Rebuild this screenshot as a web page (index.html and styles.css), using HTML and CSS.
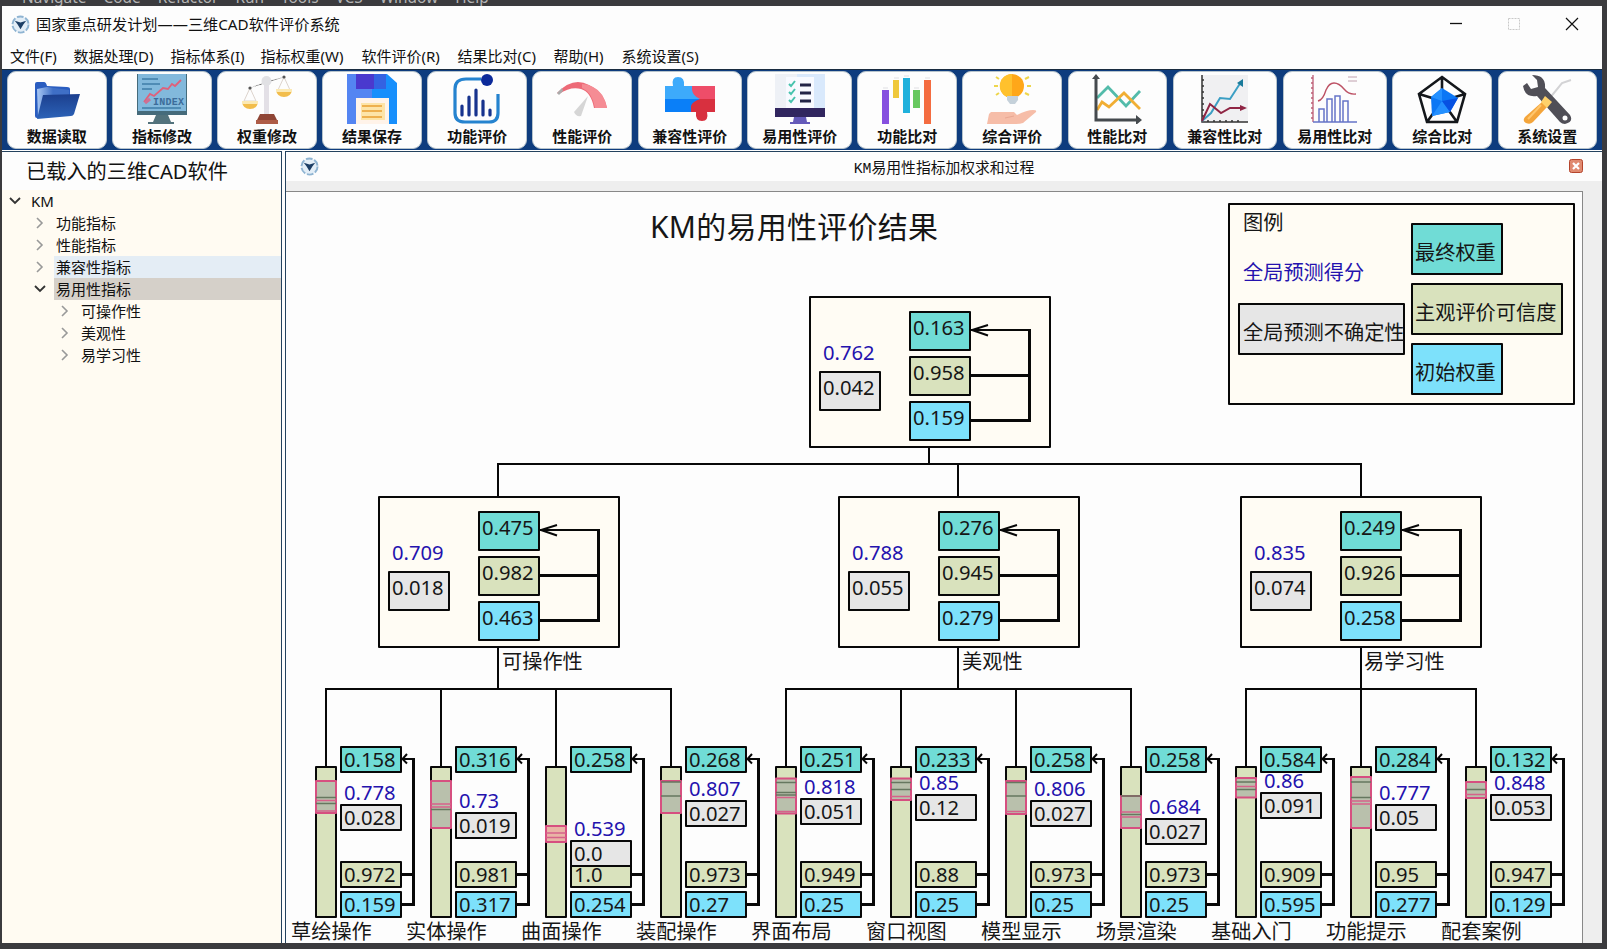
FILE: index.html
```html
<!DOCTYPE html>
<html lang="zh-CN">
<head>
<meta charset="utf-8">
<title>国家重点研发计划——三维CAD软件评价系统</title>
<link rel="stylesheet" href="styles.css">
</head>
<body>
<div class="backdrop"><span>Navigate</span><span>Code</span><span>Refactor</span><span>Run</span><span>Tools</span><span>VCS</span><span>Window</span><span>Help</span></div>
<div class="window">
  <header class="titlebar">
    <svg class="logo" viewBox="0 0 20 20"><circle cx="10" cy="10" r="8.5" fill="#e3eef7" stroke="#8fb4d2" stroke-width="2" stroke-dasharray="7 2"/><path d="M4 6l6 2 6-2-3 4-3 5-3-5z" fill="#1d3f66"/></svg>
    <h1>国家重点研发计划——三维CAD软件评价系统</h1>
    <div class="controls">
      <svg viewBox="0 0 14 14"><path d="M1 6.5h12" stroke="#111" stroke-width="1.3"/></svg>
      <svg viewBox="0 0 14 14"><path d="M1.5 1.5h11v11h-11z" fill="none" stroke="#c9c9c9" stroke-dasharray="2 1"/></svg>
      <svg viewBox="0 0 14 14"><path d="M1 1l12 12M13 1L1 13" stroke="#111" stroke-width="1.2"/></svg>
    </div>
  </header>
  <nav class="menu"><span>文件(F)</span><span>数据处理(D)</span><span>指标体系(I)</span><span>指标权重(W)</span><span>软件评价(R)</span><span>结果比对(C)</span><span>帮助(H)</span><span>系统设置(S)</span></nav>

  <div class="toolbar">
    <button class="tool"><svg viewBox="0 0 50 50"><defs><linearGradient id="fb" x1="0" x2="1"><stop offset="0" stop-color="#a9c8f4"/><stop offset=".5" stop-color="#3f6fc6"/></linearGradient><linearGradient id="ff" x1="0" y1="0" x2="0" y2="1"><stop offset="0" stop-color="#1c3f8e"/><stop offset="1" stop-color="#2c63b8"/></linearGradient></defs><path d="M3 10q0-2 2-2h7q2 0 3 4l20 1q3 0 3 2v8L8 44H5q-2 0-2-2z" fill="#2a5dc0"/><path d="M5 15l10-2 22 3v8L6 43z" fill="url(#fb)"/><path d="M11 21l37-1-6 20q-1 2-3 2L5 45z" fill="url(#ff)"/></svg><b>数据读取</b></button>
    <button class="tool"><svg viewBox="0 0 50 50"><path d="M0 0h50v41H0z" fill="#456b7b"/><path d="M1 0h48v37H1z" fill="#82b9dc"/><path d="M5 5h16M5 10h18M5 15h10M5 34h39" stroke="#3f7da8" stroke-width="1.5"/><path d="M7 28l6-8 4 2 9-8 5 1 4-5 3 2 6-6" fill="none" stroke="#e0607a" stroke-width="1.8"/><path d="M8 29l5-4" stroke="#ce6f93" stroke-width="3"/><text x="16" y="31" class="index-label" textLength="31">INDEX</text><path d="M19 41h12l3 7h3v2H11v-2h5z" fill="#52727c"/></svg><b>指标修改</b></button>
    <button class="tool"><svg viewBox="0 0 50 50"><path d="M8 14L24 8l18-5" stroke="#e2e2e2" stroke-width="1.5" stroke-dasharray="2 2"/><path d="M8 14L2 27h12zM42 3l-6 13h12z" fill="none" stroke="#ddd4cd" stroke-width="1"/><circle cx="8" cy="14" r="1.6" fill="#555"/><circle cx="42" cy="3" r="1.6" fill="#555"/><path d="M0 28h16q-1 7-8 7t-8-7zM34 16h16q-1 7-8 7t-8-7z" fill="#f2bd4c"/><path d="M0 27h16v3H0zM34 15h16v3H34z" fill="#fbe9b4"/><path d="M22 8h5v33h-5z" fill="#e3e0e6"/><circle cx="24.500" cy="7" r="5" fill="#e1e1e4"/><path d="M18 40h14l3 6H15z" fill="#8f4535"/><path d="M14 46h22v4H14z" fill="#ae5c47"/></svg><b>权重修改</b></button>
    <button class="tool"><svg viewBox="0 0 50 50"><path d="M0 0h40l10 9v41H0z" fill="#178ffc"/><path d="M0 0h25v50H0z" fill="#5485f2"/><path d="M9 0h18v15H9z" fill="#4a39ce"/><path d="M27 0h12v15H27z" fill="#3462e2"/><path d="M9 24h33v26H9z" fill="#fff3e9"/><path d="M14 29h24v17H14z" fill="#fde4a8"/><path d="M15 32h20M15 37h20M15 43h20" stroke="#eeb04e" stroke-width="2"/></svg><b>结果保存</b></button>
    <button class="tool"><svg viewBox="0 0 50 50"><path d="M29 5H14Q3 5 3 15v24q0 9 10 9h24q9 0 9-9V20" fill="none" stroke="#2583cf" stroke-width="3.2"/><circle cx="35" cy="6" r="6" fill="#0c2a9a"/><path d="M10 32v9M17 23v18M24 16v25M31 27v14M38 36v5" stroke="#17338e" stroke-width="3.200" stroke-linecap="round"/></svg><b>功能评价</b></button>
    <button class="tool"><svg viewBox="0 0 50 50"><path d="M0 19Q16 2 32 11q15 7 18 23H37Q34 18 24 15 14 12 2 20z" fill="#ed6a77"/><path d="M25 14Q35 18 38 34h12q-3-16-14-21-5-3-11-3z" fill="#f58c94"/><path d="M0 19l5-5 1 3-4 4z" fill="#aaa"/><path d="M31 22L17 38q2 5 7 4z" fill="#d6d6d6"/></svg><b>性能评价</b></button>
    <button class="tool wide"><svg viewBox="0 0 50 50"><path d="M25 12h25v26H25z" fill="#ee4d69"/><path d="M25 25h25v13h-8q2 9-5 9t-6-9h-6z" fill="#d8303f"/><path d="M0 12h8Q6 3 13 3t6 9h8v4q1 6 8 9H0z" fill="#3daafb"/><path d="M0 25h35q-8 3-9 7v6H0z" fill="#0a7ff8"/></svg><b>兼容性评价</b></button>
    <button class="tool wide"><svg viewBox="0 0 50 50"><path d="M0 0h50v35H0z" fill="#d9e9fc"/><path d="M0 0h22v35H0z" fill="#eef1f6"/><path d="M11 3h28v32H11z" fill="#f8faff"/><path d="M0 34h50v9H0z" fill="#31265f"/><path d="M19 43h12l1 5h3v2H15v-2h3z" fill="#655ab9"/><path d="M25 11h11M25 19h11M25 27h11" stroke="#222447" stroke-width="3"/><path d="M14 10l2 2 4-5M14 18l2 2 4-5M14 26l2 2 4-5" fill="none" stroke="#46c3ad" stroke-width="2"/></svg><b>易用性评价</b></button>
    <button class="tool"><svg viewBox="0 0 50 50"><path d="M0 16h7v34H0z" fill="#8650df"/><path d="M11 6h6v18h-6z" fill="#efc83c"/><path d="M21 4h7v35h-7z" fill="#20b1dc"/><path d="M31 16h7v18h-7z" fill="#67c85f"/><path d="M42 6h7v44h-7z" fill="#f46c40"/><path d="M1 14h5M12 4h5M22 2h5M32 14h5M43 4h5" stroke="#dfdfe3"/></svg><b>功能比对</b></button>
    <button class="tool"><svg viewBox="0 0 50 50"><circle cx="25" cy="12" r="12" fill="#ffa719"/><path d="M25 0a12 12 0 0 0-5 23h5z" fill="#ffc12d"/><path d="M20 22h11v4l-3 4h-5l-3-4z" fill="#c5d1da"/><path d="M38 5l4-2M40 12h4M38 19l4 2M12 5L9 3M11 12H7M12 19l-3 2" stroke="#eed64c" stroke-width="2"/><path d="M4 38h23l3 3q10-5 16-5 4 0 3 2L36 49q-3 1-8 1H0l2-10z" fill="#f6bda8"/><path d="M27 42l-9 2" stroke="#e9a792"/></svg><b>综合评价</b></button>
    <button class="tool"><svg viewBox="0 0 50 50"><path d="M5 24l11-11 18 19 14-15" fill="none" stroke="#53bbaa" stroke-width="2.800"/><path d="M5 36l5-8 7 5 15-14 16 16" fill="none" stroke="#f1ae33" stroke-width="2.800"/><path d="M4 4v42h43" fill="none" stroke="#454a4e" stroke-width="3"/><path d="M0 5l4-5 4 5zM44 41l6 5-6 5z" fill="#454a4e"/></svg><b>性能比对</b></button>
    <button class="tool wide"><svg viewBox="0 0 50 50"><path d="M2 1h46v47H2z" fill="#f0f0f2"/><path d="M2 1v47h46M2 6h2M2 12h2M2 18h2M2 24h2M2 30h2M2 36h2M2 42h2M8 48v-2M14 48v-2M20 48v-2M26 48v-2M32 48v-2M38 48v-2" fill="none" stroke="#333" stroke-width="1.500"/><path d="M2 47l9-8 9-15 10 1L41 8" fill="none" stroke="#3c9fc4" stroke-width="2"/><path d="M2 47l8-17 11 9 9-5h11" fill="none" stroke="#8f2544" stroke-width="2"/><path d="M37 9l6-4v8z" fill="#197a9a"/><path d="M40 31l7 3-7 3z" fill="#8f2544"/></svg><b>兼容性比对</b></button>
    <button class="tool wide"><svg viewBox="0 0 50 50"><path d="M3 1v47M1 4h2M1 9h2M1 14h2M1 19h2M1 24h2M1 29h2M1 34h2M1 39h2M1 44h2" stroke="#bd5d76" stroke-width="1.300"/><path d="M3 48h44M9 48V35h5v13M17 48V25h5v23M25 48V22h5v26M33 48V27h5v21" fill="none" stroke="#6674c7" stroke-width="1.500"/><path d="M8 27q5-1 8-11 3-7 8-7 5 0 10 6 5 6 12 5" fill="none" stroke="#bd5265" stroke-width="1.400"/><path d="M38 3h9M38 7h9" stroke="#c0a0ae"/></svg><b>易用性比对</b></button>
    <button class="tool"><svg viewBox="0 0 50 50"><path d="M25 3l23 17-8 28H10L2 20zM25 3v24M48 20L25 27M40 48L25 27M10 48l15-21M2 20l23 7" fill="none" stroke="#14171b" stroke-width="2.600"/><path d="M25 14l16 10-8 14-18 4-1-19z" fill="#0c77f5"/><path d="M25 14v13l-11-4zM25 27l8 11-18 4z" fill="#2490ff"/><path d="M25 27l16-3-8 14z" fill="#0751e2"/></svg><b>综合比对</b></button>
    <button class="tool"><svg viewBox="0 0 50 50"><path d="M49 6l-9 3-13 16" fill="none" stroke="#d3d3d5" stroke-width="2"/><path d="M10 1Q24 1 23 14L48 41q4 7-5 9-3 0-5-2L15 22Q3 24 1 12l4-3 4 6 7-2-1-7z" fill="#504f57"/><circle cx="43" cy="44" r="2.500" fill="#fff"/><path d="M20 28l5 5-14 15q-3 3-7 1t-1-6z" fill="#f4a53b"/><path d="M23 22l7 6-5 6-6-6z" fill="#ffd16a"/><path d="M19 31L6 45" stroke="#ffc66c" stroke-width="2"/></svg><b>系统设置</b></button>
  </div>

  <main class="workspace">
    <aside class="sidebar">
      <h2>已载入的三维CAD软件</h2>
      <ul class="tree">
        <li><svg class="caret open" viewBox="0 0 12 12"><path d="M1 3l5 5 5-5"/></svg><span>KM</span></li>
        <li class="l1"><svg class="caret" viewBox="0 0 12 12"><path d="M3 1l5 5-5 5"/></svg><span>功能指标</span></li>
        <li class="l1"><svg class="caret" viewBox="0 0 12 12"><path d="M3 1l5 5-5 5"/></svg><span>性能指标</span></li>
        <li class="l1 hover"><svg class="caret" viewBox="0 0 12 12"><path d="M3 1l5 5-5 5"/></svg><span>兼容性指标</span></li>
        <li class="l1 selected"><svg class="caret open" viewBox="0 0 12 12"><path d="M1 3l5 5 5-5"/></svg><span>易用性指标</span></li>
        <li class="l2"><svg class="caret" viewBox="0 0 12 12"><path d="M3 1l5 5-5 5"/></svg><span>可操作性</span></li>
        <li class="l2"><svg class="caret" viewBox="0 0 12 12"><path d="M3 1l5 5-5 5"/></svg><span>美观性</span></li>
        <li class="l2"><svg class="caret" viewBox="0 0 12 12"><path d="M3 1l5 5-5 5"/></svg><span>易学习性</span></li>
      </ul>
    </aside>
    <section class="document">
      <header class="doc-head">
        <svg class="logo" viewBox="0 0 20 20"><circle cx="10" cy="10" r="8.500" fill="#e3eef7" stroke="#8fb4d2" stroke-width="2" stroke-dasharray="7 2"/><path d="M4 6l6 2 6-2-3 4-3 5-3-5z" fill="#1d3f66"/></svg>
        <h3>KM易用性指标加权求和过程</h3>
        <svg class="doc-close" viewBox="0 0 14 14"><rect x=".5" y=".5" width="13" height="13" rx="2" fill="#e08a70" stroke="#b5442c"/><path d="M4 4l6 6M10 4l-6 6" stroke="#fff" stroke-width="2.200"/></svg>
      </header>
      <div class="canvas">
        <svg class="diagram" viewBox="286 192 1296 751" width="1296" height="751">
          <defs>
            <g id="node">
              <rect class="frame" x="0" y="0" width="240" height="150"/>
              <rect class="gray" x="10" y="75" width="60" height="38"/>
              <rect class="teal" x="100" y="15" width="60" height="38"/>
              <rect class="olive" x="100" y="60" width="60" height="38"/>
              <rect class="blue" x="100" y="105" width="60" height="38"/>
              <path class="wire" d="M161 33H220"/>
              <path class="wire bold" d="M219.500 32V125M161 78.500H219M161 123.500H221"/>
              <path class="wire" d="M178 28L162 33L178 38.500"/>
            </g>
            <g id="leaf">
              <rect class="olive" x="-10" y="767" width="20" height="150"/>
              <rect class="teal" x="15" y="747" width="60" height="25"/>
              <rect class="olive" x="15" y="862" width="60" height="25"/>
              <rect class="blue" x="15" y="892" width="60" height="25"/>
              <path class="wire" d="M81 754L76.500 759L81 763.500M77 759H88"/>
              <path class="wire bold" d="M87.500 758V905M76 874.500H87M76 904.500H89"/>
            </g>
            <rect id="unc" class="gray" x="15" y="0" width="60" height="25"/>
          </defs>

          <text class="heading" x="650" y="237.500" textLength="288">KM的易用性评价结果</text>

          <g class="legend">
            <rect class="frame" x="1229" y="204" width="345" height="200"/>
            <rect class="gray" x="1239" y="304" width="165" height="50"/>
            <rect class="teal" x="1412" y="224" width="90" height="50"/>
            <rect class="olive" x="1412" y="284" width="150" height="50"/>
            <rect class="blue" x="1412" y="344" width="90" height="50"/>
            <text x="1243" y="230">图例</text>
            <text class="score" x="1243" y="280">全局预测得分</text>
            <text x="1243" y="340">全局预测不确定性</text>
            <text x="1415" y="259.500">最终权重</text>
            <text x="1415" y="319.500">主观评价可信度</text>
            <text x="1415" y="379.500">初始权重</text>
          </g>

          <path class="wire" d="M929 447V464M498 497V464H1361V497M958 464V497"/>
          <path class="wire" d="M498 647V689M326 767V689H671V767M441 689V767M556 689V767"/>
          <path class="wire" d="M958 647V689M786 767V689H1131V767M901 689V767M1016 689V767"/>
          <path class="wire" d="M1361 647V767M1246 767V689H1476V767"/>

          <g transform="translate(810 297)"><use href="#node"/><text class="score" x="13" y="63">0.762</text><text x="13" y="98">0.042</text><text x="103" y="38">0.163</text><text x="103" y="83">0.958</text><text x="103" y="128">0.159</text></g>
          <g transform="translate(379 497)"><use href="#node"/><text class="score" x="13" y="63">0.709</text><text x="13" y="98">0.018</text><text x="103" y="38">0.475</text><text x="103" y="83">0.982</text><text x="103" y="128">0.463</text><text x="123" y="172">可操作性</text></g>
          <g transform="translate(839 497)"><use href="#node"/><text class="score" x="13" y="63">0.788</text><text x="13" y="98">0.055</text><text x="103" y="38">0.276</text><text x="103" y="83">0.945</text><text x="103" y="128">0.279</text><text x="123" y="172">美观性</text></g>
          <g transform="translate(1241 497)"><use href="#node"/><text class="score" x="13" y="63">0.835</text><text x="13" y="98">0.074</text><text x="103" y="38">0.249</text><text x="103" y="83">0.926</text><text x="103" y="128">0.258</text><text x="123" y="172">易学习性</text></g>

          <g transform="translate(326 0)"><use href="#leaf"/><rect class="range" x="-10" y="781" width="20" height="32"/><path class="mark" d="M-10 797.500H10M-10 803.500H10"/><path class="pink" d="M-10 800.500H10M-10 811H10"/><use href="#unc" y="805"/><text class="score" x="18" y="800">0.778</text><text x="18" y="824.500">0.028</text><text x="18" y="766.500">0.158</text><text x="18" y="881.500">0.972</text><text x="18" y="911.500">0.159</text><text x="-35" y="938.500">草绘操作</text></g>
          <g transform="translate(441 0)"><use href="#leaf"/><rect class="range" x="-10" y="781" width="20" height="47"/><path class="mark" d="M-10 809.500H10"/><path class="pink" d="M-10 804H10M-10 807H10"/><use href="#unc" y="813"/><text class="score" x="18" y="808">0.73</text><text x="18" y="832.500">0.019</text><text x="18" y="766.500">0.316</text><text x="18" y="881.500">0.981</text><text x="18" y="911.500">0.317</text><text x="-35" y="938.500">实体操作</text></g>
          <g transform="translate(556 0)"><use href="#leaf"/><rect class="range hot" x="-10" y="826" width="20" height="16"/><path class="pink" d="M-10 833H10M-10 837.500H10"/><text x="18" y="881.500">1.0</text><use href="#unc" y="841"/><text class="score" x="18" y="836">0.539</text><text x="18" y="860.500">0.0</text><text x="18" y="766.500">0.258</text><text x="18" y="911.500">0.254</text><text x="-35" y="938.500">曲面操作</text></g>
          <g transform="translate(671 0)"><use href="#leaf"/><rect class="range" x="-10" y="781" width="20" height="32"/><path class="mark" d="M-10 782H10M-10 796H10"/><use href="#unc" y="801"/><text class="score" x="18" y="796">0.807</text><text x="18" y="820.500">0.027</text><text x="18" y="766.500">0.268</text><text x="18" y="881.500">0.973</text><text x="18" y="911.500">0.27</text><text x="-35" y="938.500">装配操作</text></g>
          <g transform="translate(786 0)"><use href="#leaf"/><rect class="range" x="-10" y="778.500" width="20" height="35"/><path class="mark" d="M-10 782.500H10M-10 792.500H10M-10 795H10"/><path class="pink" d="M-10 797.500H10M-10 811.500H10"/><use href="#unc" y="799"/><text class="score" x="18" y="794">0.818</text><text x="18" y="818.500">0.051</text><text x="18" y="766.500">0.251</text><text x="18" y="881.500">0.949</text><text x="18" y="911.500">0.25</text><text x="-35" y="938.500">界面布局</text></g>
          <g transform="translate(901 0)"><use href="#leaf"/><rect class="range" x="-10" y="778.500" width="20" height="21.500"/><path class="mark" d="M-10 782.500H10M-10 789.500H10"/><path class="pink" d="M-10 796.500H10"/><use href="#unc" y="795"/><text class="score" x="18" y="790">0.85</text><text x="18" y="814.500">0.12</text><text x="18" y="766.500">0.233</text><text x="18" y="881.500">0.88</text><text x="18" y="911.500">0.25</text><text x="-35" y="938.500">窗口视图</text></g>
          <g transform="translate(1016 0)"><use href="#leaf"/><rect class="range" x="-10" y="781" width="20" height="33"/><path class="mark" d="M-10 782.500H10M-10 796H10"/><path class="pink" d="M-10 811.500H10"/><use href="#unc" y="801"/><text class="score" x="18" y="796">0.806</text><text x="18" y="820.500">0.027</text><text x="18" y="766.500">0.258</text><text x="18" y="881.500">0.973</text><text x="18" y="911.500">0.25</text><text x="-35" y="938.500">模型显示</text></g>
          <g transform="translate(1131 0)"><use href="#leaf"/><rect class="range" x="-10" y="796" width="20" height="32"/><path class="mark" d="M-10 796H10M-10 814.500H10"/><path class="pink" d="M-10 812H10M-10 817H10"/><use href="#unc" y="819"/><text class="score" x="18" y="814">0.684</text><text x="18" y="838.500">0.027</text><text x="18" y="766.500">0.258</text><text x="18" y="881.500">0.973</text><text x="18" y="911.500">0.25</text><text x="-35" y="938.500">场景渲染</text></g>
          <g transform="translate(1246 0)"><use href="#leaf"/><rect class="range" x="-10" y="778" width="20" height="19.500"/><path class="mark" d="M-10 782H10M-10 789.500H10"/><path class="pink" d="M-10 786.500H10"/><use href="#unc" y="793"/><text class="score" x="18" y="788">0.86</text><text x="18" y="812.500">0.091</text><text x="18" y="766.500">0.584</text><text x="18" y="881.500">0.909</text><text x="18" y="911.500">0.595</text><text x="-35" y="938.500">基础入门</text></g>
          <g transform="translate(1361 0)"><use href="#leaf"/><rect class="range" x="-10" y="777" width="20" height="51"/><path class="mark" d="M-10 782H10M-10 797.500H10"/><path class="pink" d="M-10 801H10M-10 804H10"/><use href="#unc" y="805"/><text class="score" x="18" y="800">0.777</text><text x="18" y="824.500">0.05</text><text x="18" y="766.500">0.284</text><text x="18" y="881.500">0.95</text><text x="18" y="911.500">0.277</text><text x="-35" y="938.500">功能提示</text></g>
          <g transform="translate(1476 0)"><use href="#leaf"/><rect class="range" x="-10" y="782" width="20" height="16"/><path class="mark" d="M-10 789.500H10"/><path class="pink" d="M-10 794.500H10"/><use href="#unc" y="795"/><text class="score" x="18" y="790">0.848</text><text x="18" y="814.500">0.053</text><text x="18" y="766.500">0.132</text><text x="18" y="881.500">0.947</text><text x="18" y="911.500">0.129</text><text x="-35" y="938.500">配套案例</text></g>
        </svg>
      </div>
    </section>
  </main>
</div>
</body>
</html>
```
FILE: styles.css
```css
* { box-sizing: border-box; margin: 0; padding: 0; }
body {
  width: 1607px;
  height: 949px;
  overflow: hidden;
  background: #3b3b3e;
  color: #111;
  font-family: "Noto Sans", "Noto Sans CJK SC", sans-serif;
}
.backdrop {
  display: flex;
  align-items: flex-end;
  gap: 17px;
  height: 6px;
  padding-left: 22px;
  overflow: hidden;
  color: #b5b5b5;
  font-size: 15.4px;
  line-height: 17px;
}
.window {
  display: flex;
  flex-direction: column;
  width: 1600px;
  height: 937px;
  margin-left: 2px;
  background: #fdfdfd;
}
.logo { width: 19px; height: 19px; }
.titlebar {
  display: flex;
  align-items: center;
  gap: 6px;
  height: 36px;
  padding: 0 23px 0 9px;
}
.titlebar h1 { flex: 1; font-size: 15.2px; font-weight: 400; line-height: 20px; }
.controls { display: flex; gap: 44px; }
.controls svg { width: 14px; height: 14px; }
.menu {
  display: grid;
  grid-template-columns: 63.5px 97px 90px 101px 96px 96px 68px 100px;
  align-items: center;
  height: 27px;
  padding-left: 8px;
  font-size: 15px;
  line-height: 20px;
  white-space: nowrap;
}
.toolbar {
  display: flex;
  gap: 5.5px;
  height: 81px;
  padding: 1px 5px;
  background: #0e3c7e;
  border-top: 1px solid #1a2c40;
}
.tool {
  display: flex;
  flex-direction: column;
  align-items: center;
  width: 99.6px;
  height: 78px;
  padding-top: 2px;
  flex: none;
  border: 1px solid #b7c4cc;
  border-radius: 9px;
  background: #fdfdfd;
  color: #111;
  font-family: inherit;
}
.tool.wide { width: 104.4px; }
.tool svg { width: 50px; height: 50px; flex: none; }
.tool b { font-size: 15px; line-height: 22px; margin-top: 1px; white-space: nowrap; }
.index-label { font: bold 10px "Liberation Mono", monospace; fill: #3c6c9a; }
.workspace { display: flex; flex: 1; min-height: 0; border-top: 1px solid #fff; }
.sidebar {
  width: 280px;
  border-top: 1px solid #24425e;
  border-right: 1px solid #24425e;
  background: #fffbf2;
}
.sidebar h2 {
  height: 38px;
  padding-left: 24px;
  background: #fdfdfd;
  font-size: 20.2px;
  font-weight: 400;
  line-height: 39px;
}
.tree { list-style: none; font-size: 15px; line-height: 22px; }
.tree li { display: flex; align-items: center; height: 22px; padding-left: 7px; }
.tree .l1 { padding-left: 32px; }
.tree .l2 { padding-left: 57px; }
.tree span { flex: 1; height: 22px; margin-left: 8px; padding-left: 2px; }
.hover span { background: #e4edf5; }
.selected span { background: #d5d0c9; }
.caret { width: 12px; height: 12px; fill: none; stroke: #999; stroke-width: 1.6; }
.caret.open { stroke: #333; stroke-width: 1.8; }
.document {
  flex: 1;
  display: flex;
  flex-direction: column;
  min-width: 0;
  margin-left: 3px;
  border-top: 1px solid #24425e;
  border-left: 1px solid #24425e;
  background: #eeeeee;
}
.doc-head {
  display: flex;
  align-items: center;
  height: 29px;
  padding: 0 19px 0 14px;
  background: #fdfdfd;
}
.doc-head h3 {
  flex: 1;
  text-align: center;
  font: 400 14.8px "Liberation Mono", "Noto Sans CJK SC", monospace;
}
.doc-close { width: 14px; height: 14px; }
.canvas {
  width: 1297px;
  height: 755px;
  margin-top: 10px;
  border-top: 1px solid #888;
  border-right: 1px solid #888;
  background: #fdfdfd;
  overflow: hidden;
}
.diagram { display: block; }
.diagram rect { stroke: #080808; stroke-width: 2; stroke-linejoin: round; }
.diagram text { font-size: 20.2px; fill: #161616; }
.diagram text.score { fill: #2412ae; }
.diagram text.heading { font-size: 30px; }
.diagram .frame { fill: #fffcf4; }
.diagram .gray { fill: #e6e6e6; }
.diagram .teal { fill: #70dcd6; }
.diagram .olive { fill: #d9e2bd; }
.diagram .blue { fill: #7de1fb; }
.wire { fill: none; stroke: #080808; stroke-width: 2; }
.wire.bold { stroke-width: 3; }
.diagram rect.range { fill: #b9c0ac; stroke: #d64f80; }
.diagram rect.range.hot { fill: #e9b4a5; }
.mark { stroke: #66775f; stroke-width: 1.5; }
.pink { stroke: #d6628a; stroke-width: 1.5; }
```
